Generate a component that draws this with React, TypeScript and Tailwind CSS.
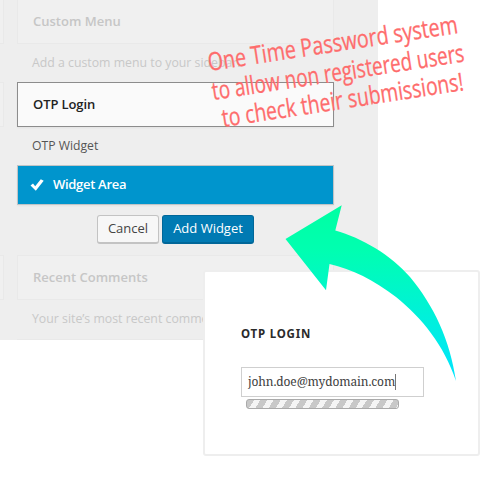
import type { ReactNode } from "react";

function FadedBox({ title }: { title: string }) {
  return (
    <div className="flex h-[45px] items-center border border-[#e9e9e9] bg-[#f0f0f0] pl-[15px] text-[13px] font-semibold text-[#c6c6c6]">
      {title}
    </div>
  );
}

function SideStub({ className }: { className: string }) {
  return <div className={`h-[45px] border border-l-0 border-[#e9e9e9] bg-[#f0f0f0] ${className}`} />;
}

function Note({ children, className }: { children: ReactNode; className: string }) {
  return (
    <div
      className={`absolute origin-bottom-left whitespace-nowrap font-['Open_Sans',sans-serif] text-[25px] leading-[30px] text-[#fe6c6c] [-webkit-text-stroke:0.3px_#fe6c6c] ${className}`}
    >
      {children}
    </div>
  );
}

function WidgetPanel() {
  return (
    <section className="flex h-[340px] w-[378px] gap-[13px] overflow-hidden bg-[#eee] font-['Open_Sans',sans-serif]">
      <div className="w-1 shrink-0">
        <SideStub className="-mt-px" />
        <SideStub className="mt-[38px]" />
        <SideStub className="mt-[128px]" />
      </div>
      <div className="w-[317px] shrink-0">
        <div className="-mt-px">
          <FadedBox title="Custom Menu" />
        </div>
        <p className="h-[38px] pl-[15px] text-[12.3px] leading-[38px] text-[#c8c8c8]">Add a custom menu to your sidebar.</p>
        <div className="flex h-[45px] items-center border border-[#8c8c8c] bg-[#fafafa] pl-[15px] text-[13px] font-semibold tracking-[-0.1px] text-[#222] shadow-xs">
          OTP Login
        </div>
        <p className="h-[38px] pl-[15px] text-[12.2px] leading-[37px] text-[#555]">OTP Widget</p>
        <div className="flex h-10 items-center border border-[#bfc4c6] bg-[#0095cd] pl-3 text-[13px] font-semibold tracking-[-0.3px] text-white shadow-xs">
          <svg className="mr-[9px] h-[14px] w-[14px]" viewBox="0 0 14 14">
            <path d="M0.5 7.5 3 5.5 5.2 8.2 10.8 1.2 13.7 2.8 5.8 12.7Z" fill="currentColor" />
          </svg>
          Widget Area
        </div>
        <div className="mt-[10px] flex gap-[3px] pl-20 text-[13px]">
          <button className="h-[29px] w-[62px] rounded-[3px] border border-b-2 border-[#c3c3c3] bg-[#f7f7f7] text-[#444]">
            Cancel
          </button>
          <button className="h-[29px] w-[92px] rounded-[3px] border border-b-2 border-[#006799] bg-[#007ab3] text-white">
            Add Widget
          </button>
        </div>
        <div className="mt-[11px]">
          <FadedBox title="Recent Comments" />
        </div>
        <p className="h-[39px] pl-[15px] text-[12.3px] leading-[38px] text-[#c8c8c8]">Your site’s most recent comments.</p>
        <div className="h-4 border border-[#e9e9e9] bg-[#f0f0f0]" />
      </div>
    </section>
  );
}

function LoginCard() {
  return (
    <section className="absolute left-[203px] top-[270px] h-[186px] w-[277px] rounded-[3px] border-2 border-[#eee] bg-white pl-9 pt-[53px]">
      <h2 className="font-['Noto_Sans',sans-serif] text-[11.5px] leading-[18px] font-bold tracking-[0.8px] text-[#2b2b2b]">
        OTP LOGIN
      </h2>
      <div className="mt-6 flex h-[30px] w-[183px] items-center border border-[#cfcfcf] pl-1.5">
        <span className="font-['Noto_Serif','DejaVu_Serif',serif] text-[12px] tracking-[-0.12px] text-[#404040]">
          john.doe@mydomain.com
        </span>
        <span className="h-4 w-px bg-[#777]" />
      </div>
      <div className="mt-0.5 ml-[5px] h-[10px] w-[153px] rounded-[3px] border border-[#aaa] bg-[repeating-linear-gradient(122deg,#c8c8c8_0px,#c8c8c8_6px,#f4f4f4_6px,#f4f4f4_11.3px)]" />
    </section>
  );
}

export default function App() {
  return (
    <main className="relative h-[500px] w-[495px] overflow-hidden bg-white">
      <WidgetPanel />
      <LoginCard />
      <Note className="left-[210px] top-[46px] [transform:rotate(-8.7deg)_scaleX(0.787)]">One Time Password system</Note>
      <Note className="left-[214px] top-[75px] [transform:rotate(-8.7deg)_scaleX(0.753)]">to allow non registered users</Note>
      <Note className="left-[224px] top-[102px] [transform:rotate(-8.7deg)_scaleX(0.773)]">to check their submissions!</Note>
      <svg className="absolute left-[270px] top-[190px] h-[200px] w-[200px]" viewBox="0 0 200 200">
        <defs>
          <linearGradient id="arrow" x1="0" y1="15" x2="0" y2="191" gradientUnits="userSpaceOnUse">
            <stop offset="0" stopColor="#00ffa2" />
            <stop offset="0.25" stopColor="#00ffb0" />
            <stop offset="0.65" stopColor="#00f0dc" />
            <stop offset="1" stopColor="#00e4ff" />
          </linearGradient>
        </defs>
        <path
          d="M15.5 49 71.7 15.2 65.3 40.5C92 48 121 65 140 87C164 116 180 150 186 191C174 155 152 128 126 107C104 90 82 79 59.5 74L56 100.3Z"
          fill="url(#arrow)"
        />
      </svg>
    </main>
  );
}
